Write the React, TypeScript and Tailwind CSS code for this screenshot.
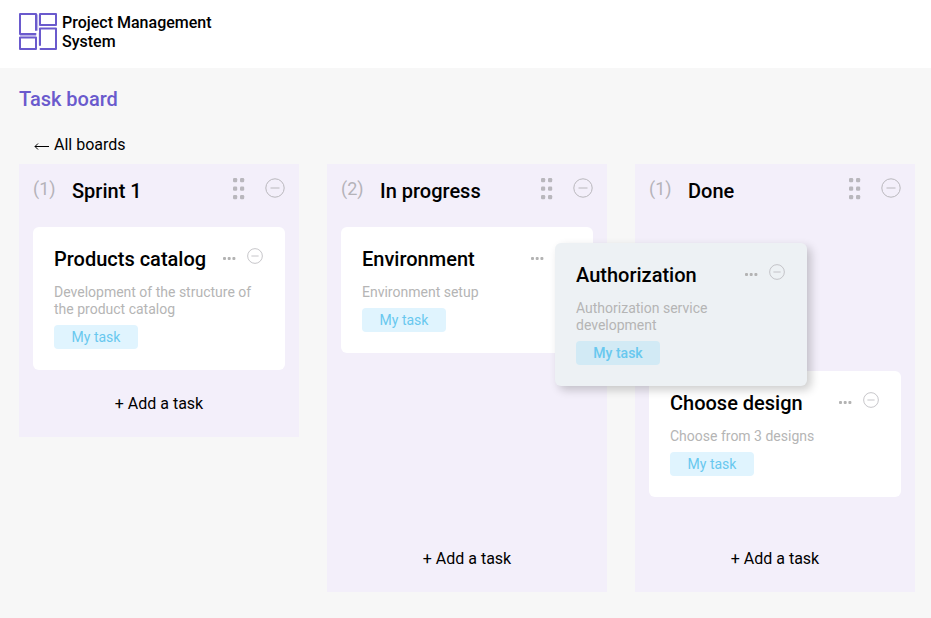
import { ReactNode } from "react";

type Task = { title: string; text: string };

function MinusCircle({ className }: { className: string }) {
  return (
    <svg viewBox="0 0 20 20" fill="none" className={className} aria-hidden="true">
      <circle cx="10" cy="10" r="9.2" stroke="#b9b7bc" strokeWidth="1" />
      <path d="M5.5 10h9" stroke="#b9b7bc" strokeWidth="1" />
    </svg>
  );
}

function Grip() {
  return (
    <svg viewBox="0 0 12 22" width="12" height="22" fill="#b9b7bd" aria-hidden="true">
      {[0, 8.5, 17].map((y) => (
        <g key={y}>
          <rect x="0" y={y} width="4.2" height="4.2" rx="1.2" />
          <rect x="7" y={y} width="4.2" height="4.2" rx="1.2" />
        </g>
      ))}
    </svg>
  );
}

function Dots() {
  return (
    <svg viewBox="0 0 13 3" width="13" height="3" fill="#b3b3b3" aria-hidden="true">
      <rect x="0" y="0" width="3" height="3" rx="1" />
      <rect x="4.7" y="0" width="3" height="3" rx="1" />
      <rect x="9.4" y="0" width="3" height="3" rx="1" />
    </svg>
  );
}

function ArrowLeft() {
  return (
    <svg viewBox="0 0 16 10" width="16" height="10" fill="none" stroke="#000" strokeWidth="1" aria-hidden="true">
      <path d="M1 6.5h14M4 3.500L1 6.500L4 9.500" />
    </svg>
  );
}

function Logo() {
  return (
    <svg
      viewBox="0 0 38 38"
      fill="none"
      stroke="#6a5acd"
      strokeWidth="2"
      strokeLinejoin="round"
      strokeLinecap="round"
      className="size-[38px] shrink-0"
      aria-hidden="true"
    >
      <path d="M18.500 2v15M20.500 20v12M1.500 22.500h15" stroke="#b9b2e8" strokeWidth="1.5" />
      <path d="M17 17V1H1v20h15.500" />
      <rect x="21" y="1" width="16" height="11" />
      <rect x="1" y="24.500" width="16" height="11.500" />
      <path d="M21 32V15.500h16V36H21.500" />
    </svg>
  );
}

function TaskCard({ task, dragged = false }: { task: Task; dragged?: boolean }) {
  return (
    <article
      className={
        dragged
          ? "w-[252px] rounded-md bg-[#edf1f4] p-[21px] shadow-[4px_4px_10px_rgba(0,0,0,0.2)]"
          : "rounded-md bg-white p-[21px]"
      }
    >
      <div className="flex items-start">
        <h3 className="grow text-xl leading-[22px] font-medium text-black">{task.title}</h3>
        <button type="button" aria-label="Task actions" className="mt-[9px] mr-[11px]">
          <Dots />
        </button>
        <button type="button" aria-label="Delete task" className="mr-px">
          <MinusCircle className="size-4" />
        </button>
      </div>
      <p className="mt-[14px] text-sm leading-[17px] text-[#b5b5b5]">{task.text}</p>
      <span
        className={
          dragged
            ? "mt-[7px] block h-6 w-[84px] rounded-sm bg-[#d2eaf5] text-center text-sm leading-6 font-medium text-[#68c8ef]"
            : "mt-[7px] block h-6 w-[84px] rounded-sm bg-[#e0f4fe] text-center text-sm leading-6 font-normal text-[#68c8ef]"
        }
      >
        My task
      </span>
    </article>
  );
}

function Column({ title, count, tall = false, children }: { title: string; count: number; tall?: boolean; children: ReactNode }) {
  return (
    <section className="w-[280px] shrink-0 bg-[#f3effa] px-[14px]">
      <header className="flex h-[63px] items-start pt-[14px]">
        <span className="w-[39px] text-lg leading-[22px] text-[#b5b3b9]">({count})</span>
        <h2 className="grow text-xl leading-[26px] font-medium text-black">{title}</h2>
        <button type="button" aria-label="Move column" className="mr-5">
          <Grip />
        </button>
        <button type="button" aria-label="Delete column">
          <MinusCircle className="size-5" />
        </button>
      </header>
      <div className={tall ? "min-h-[298px]" : ""}>{children}</div>
      <button type="button" className="block h-[67px] w-full text-center text-base text-black">
        + Add a task
      </button>
    </section>
  );
}

export default function App() {
  return (
    <div className="min-h-screen bg-[#f7f7f7] font-[Roboto,sans-serif]">
      <header className="flex h-[68px] items-start gap-[5px] bg-white px-[19px] pt-[13px]">
        <Logo />
        <p className="text-base leading-[19px] font-medium text-black">
          Project Management
          <br />
          System
        </p>
      </header>
      <main className="px-[19px] pt-[19px]">
        <h1 className="text-xl leading-6 font-medium text-[#6a5acd]">Task board</h1>
        <a href="#boards" className="mt-[22px] ml-[15px] flex w-fit items-center gap-1 text-base leading-6 text-black">
          <ArrowLeft />
          All boards
        </a>
        <div className="mt-[7px] flex items-start gap-7">
          <Column title="Sprint 1" count={1}>
            <TaskCard task={{ title: "Products catalog", text: "Development of the structure of the product catalog" }} />
          </Column>
          <div className="relative z-10">
            <Column title="In progress" count={2} tall>
              <TaskCard task={{ title: "Environment", text: "Environment setup" }} />
            </Column>
            <div className="absolute top-[79px] left-[228px]">
              <TaskCard dragged task={{ title: "Authorization", text: "Authorization service development" }} />
            </div>
          </div>
          <Column title="Done" count={1} tall>
            <div className="h-36" />
            <TaskCard task={{ title: "Choose design", text: "Choose from 3 designs" }} />
          </Column>
        </div>
      </main>
    </div>
  );
}
